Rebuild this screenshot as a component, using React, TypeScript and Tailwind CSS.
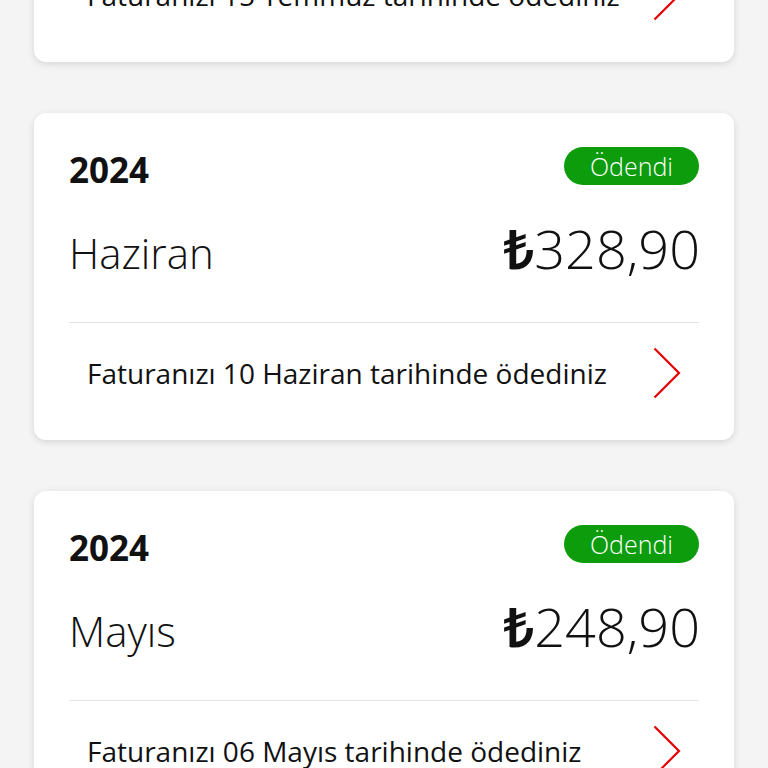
import React from "react";

type Bill = {
  year: string;
  month: string;
  amount: string;
  note: string;
};

const bills: Bill[] = [
  { year: "2024", month: "Temmuz", amount: "328,90", note: "Faturanızı 15 Temmuz tarihinde ödediniz" },
  { year: "2024", month: "Haziran", amount: "328,90", note: "Faturanızı 10 Haziran tarihinde ödediniz" },
  { year: "2024", month: "Mayıs", amount: "248,90", note: "Faturanızı 06 Mayıs tarihinde ödediniz" },
];

const Chevron = () => (
  <svg width="28" height="52" viewBox="0 0 28 52" fill="none">
    <polyline points="1.5,1.5 26,26 1.5,50.5" stroke="#e60000" strokeWidth="2.2" strokeLinejoin="miter" />
  </svg>
);

const BillCard = ({ bill, first }: { bill: Bill; first?: boolean }) => (
  <div
    className={
      "bg-white rounded-[12px] shadow-[0_2px_7px_rgba(0,0,0,0.13)] px-[35px] pt-[34px] pb-[17px] " +
      (first ? "-mt-[265px]" : "")
    }
  >
    <div className="flex justify-between items-start h-[38px]">
      <span className="text-[35px] font-bold leading-none text-[#111] mt-[5px]">{bill.year}</span>
      <span className="h-[38px] px-[26px] rounded-full bg-[#0c9c0c] text-white text-[25px] font-light leading-[38px]">
        Ödendi
      </span>
    </div>
    <div className="flex justify-between items-baseline h-[137px] pt-[33px] text-[#111]">
      <span className="text-[42px] font-light leading-[60px]">{bill.month}</span>
      <span className="text-[54px] font-light leading-[60px] -mr-[1px]">
        <span className="font-semibold">₺</span>
        {bill.amount}
      </span>
    </div>
    <div className="border-t border-[#e2e2e2]" />
    <div className="flex justify-between items-center h-[100px] px-[18px]">
      <span className="text-[28px] text-[#111]">{bill.note}</span>
      <Chevron />
    </div>
  </div>
);

export default function App() {
  return (
    <div
      className="h-[768px] overflow-hidden bg-[#f4f4f4]"
      style={{ fontFamily: '"Open Sans", "Noto Sans", sans-serif' }}
    >
      <div className="flex flex-col gap-[51px] px-[34px]">
        {bills.map((b, i) => (
          <BillCard key={i} bill={b} first={i === 0} />
        ))}
      </div>
    </div>
  );
}
